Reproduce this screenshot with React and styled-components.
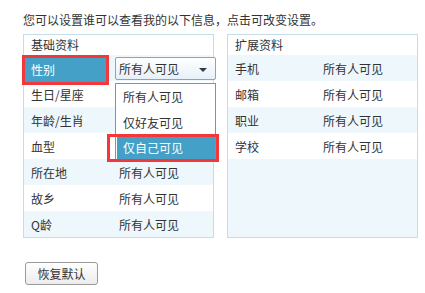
import React from 'react';
import styled, { createGlobalStyle } from 'styled-components';

const GlobalStyle = createGlobalStyle`
  html, body {
    margin: 0;
    padding: 0;
    background: #ffffff;
  }
  body {
    font-family: "Noto Sans CJK SC", "Noto Sans", sans-serif;
    font-size: 12px;
    color: #333333;
  }
`;

const basicRows = [
  { label: '生日/星座', value: '' },
  { label: '年龄/生肖', value: '' },
  { label: '血型', value: '' },
  { label: '所在地', value: '所有人可见' },
  { label: '故乡', value: '所有人可见' },
  { label: 'Q龄', value: '所有人可见' }
];

const extraRows = [
  { label: '手机', value: '所有人可见' },
  { label: '邮箱', value: '所有人可见' },
  { label: '职业', value: '所有人可见' },
  { label: '学校', value: '所有人可见' }
];

const App = () => {
  return (
    <Page>
      <GlobalStyle />
      <Intro>您可以设置谁可以查看我的以下信息，点击可改变设置。</Intro>
      <Panels>
        <Panel>
          <PanelHeader>基础资料</PanelHeader>
          <Row $alt>
            <ActiveLabel>性别</ActiveLabel>
            <SelectWrap>
              <Select>
                所有人可见
                <Arrow />
              </Select>
              <Dropdown>
                <Option>所有人可见</Option>
                <Option>仅好友可见</Option>
                <Option $active>仅自己可见</Option>
              </Dropdown>
            </SelectWrap>
          </Row>
          {basicRows.map((r, i) => (
            <Row key={r.label} $alt={i % 2 === 1}>
              <Label>{r.label}</Label>
              <Value>{r.value}</Value>
            </Row>
          ))}
        </Panel>
        <Panel>
          <PanelHeader>扩展资料</PanelHeader>
          {extraRows.map((r, i) => (
            <Row key={r.label} $alt={i % 2 === 0}>
              <Label>{r.label}</Label>
              <Value>{r.value}</Value>
            </Row>
          ))}
        </Panel>
      </Panels>
      <ResetButton>恢复默认</ResetButton>
    </Page>
  );
};

const Page = styled.div`
  padding: 12px 0 0 23px;
  width: 425px;
  height: 293px;
  box-sizing: border-box;
`;

const Intro = styled.div`
  line-height: 16px;
  margin-bottom: 6px;
  white-space: nowrap;
`;

const Panels = styled.div`
  display: flex;
  gap: 13px;
`;

const Panel = styled.div`
  width: 191px;
  height: 204px;
  box-sizing: border-box;
  border: 1px solid #c6dce9;
  background-color: #edf7fc;
`;

const PanelHeader = styled.div`
  height: 20px;
  line-height: 20px;
  padding-left: 7px;
  background-color: #ffffff;
`;

const Row = styled.div`
  display: flex;
  align-items: center;
  height: 26px;
  background-color: ${(p) => (p.$alt ? '#edf7fc' : '#ffffff')};
`;

const Label = styled.div`
  flex-shrink: 0;
  width: 88px;
  padding-left: 7px;
  white-space: nowrap;
`;

const Value = styled.div`
  white-space: nowrap;
`;

const ActiveLabel = styled.div`
  flex-shrink: 0;
  align-self: flex-start;
  width: 75px;
  height: 24px;
  line-height: 24px;
  margin: 3px 0 0 1px;
  padding-left: 6px;
  color: #ffffff;
  background-color: #44a0c7;
  outline: 3px solid #f2383a;
`;

const SelectWrap = styled.div`
  flex-shrink: 0;
  position: relative;
  align-self: flex-start;
  margin: 2px 0 0 9px;
`;

const Select = styled.div`
  position: relative;
  width: 101px;
  height: 23px;
  box-sizing: border-box;
  line-height: 21px;
  padding-left: 3px;
  border: 1px solid #7ba8cc;
  border-radius: 2px;
  background: linear-gradient(#ffffff, #e7f0f8);
`;

const Arrow = styled.span`
  position: absolute;
  right: 8px;
  top: 10px;
  border-left: 4px solid transparent;
  border-right: 4px solid transparent;
  border-top: 4px solid #2e3b4e;
`;

const Dropdown = styled.div`
  position: absolute;
  top: 26px;
  left: 0;
  z-index: 2;
  width: 101px;
  height: 79px;
  box-sizing: border-box;
  border: 1px solid #5f9dc9;
  background-color: #ffffff;
`;

const Option = styled.div`
  position: relative;
  height: ${(p) => (p.$active ? '22px' : '26px')};
  line-height: ${(p) => (p.$active ? '22px' : '26px')};
  margin: ${(p) => (p.$active ? '1px 0 0 1px' : '0')};
  padding-left: ${(p) => (p.$active ? '6px' : '7px')};
  white-space: nowrap;
  color: ${(p) => (p.$active ? '#ffffff' : '#333333')};
  background-color: ${(p) => (p.$active ? '#44a0c7' : 'transparent')};

  &::after {
    content: '';
    display: ${(p) => (p.$active ? 'block' : 'none')};
    position: absolute;
    top: -3px;
    bottom: -3px;
    left: -10px;
    right: -4px;
    border: 3px solid #f2383a;
  }
`;

const ResetButton = styled.button`
  display: block;
  margin: 24px 0 0 2px;
  width: 73px;
  height: 23px;
  padding: 0;
  font-family: "Noto Sans CJK SC", "Noto Sans", sans-serif;
  font-size: 12px;
  color: #333333;
  border: 1px solid #9a9a9a;
  border-radius: 3px;
  background: linear-gradient(#ffffff, #ececec);
`;

export default App;
